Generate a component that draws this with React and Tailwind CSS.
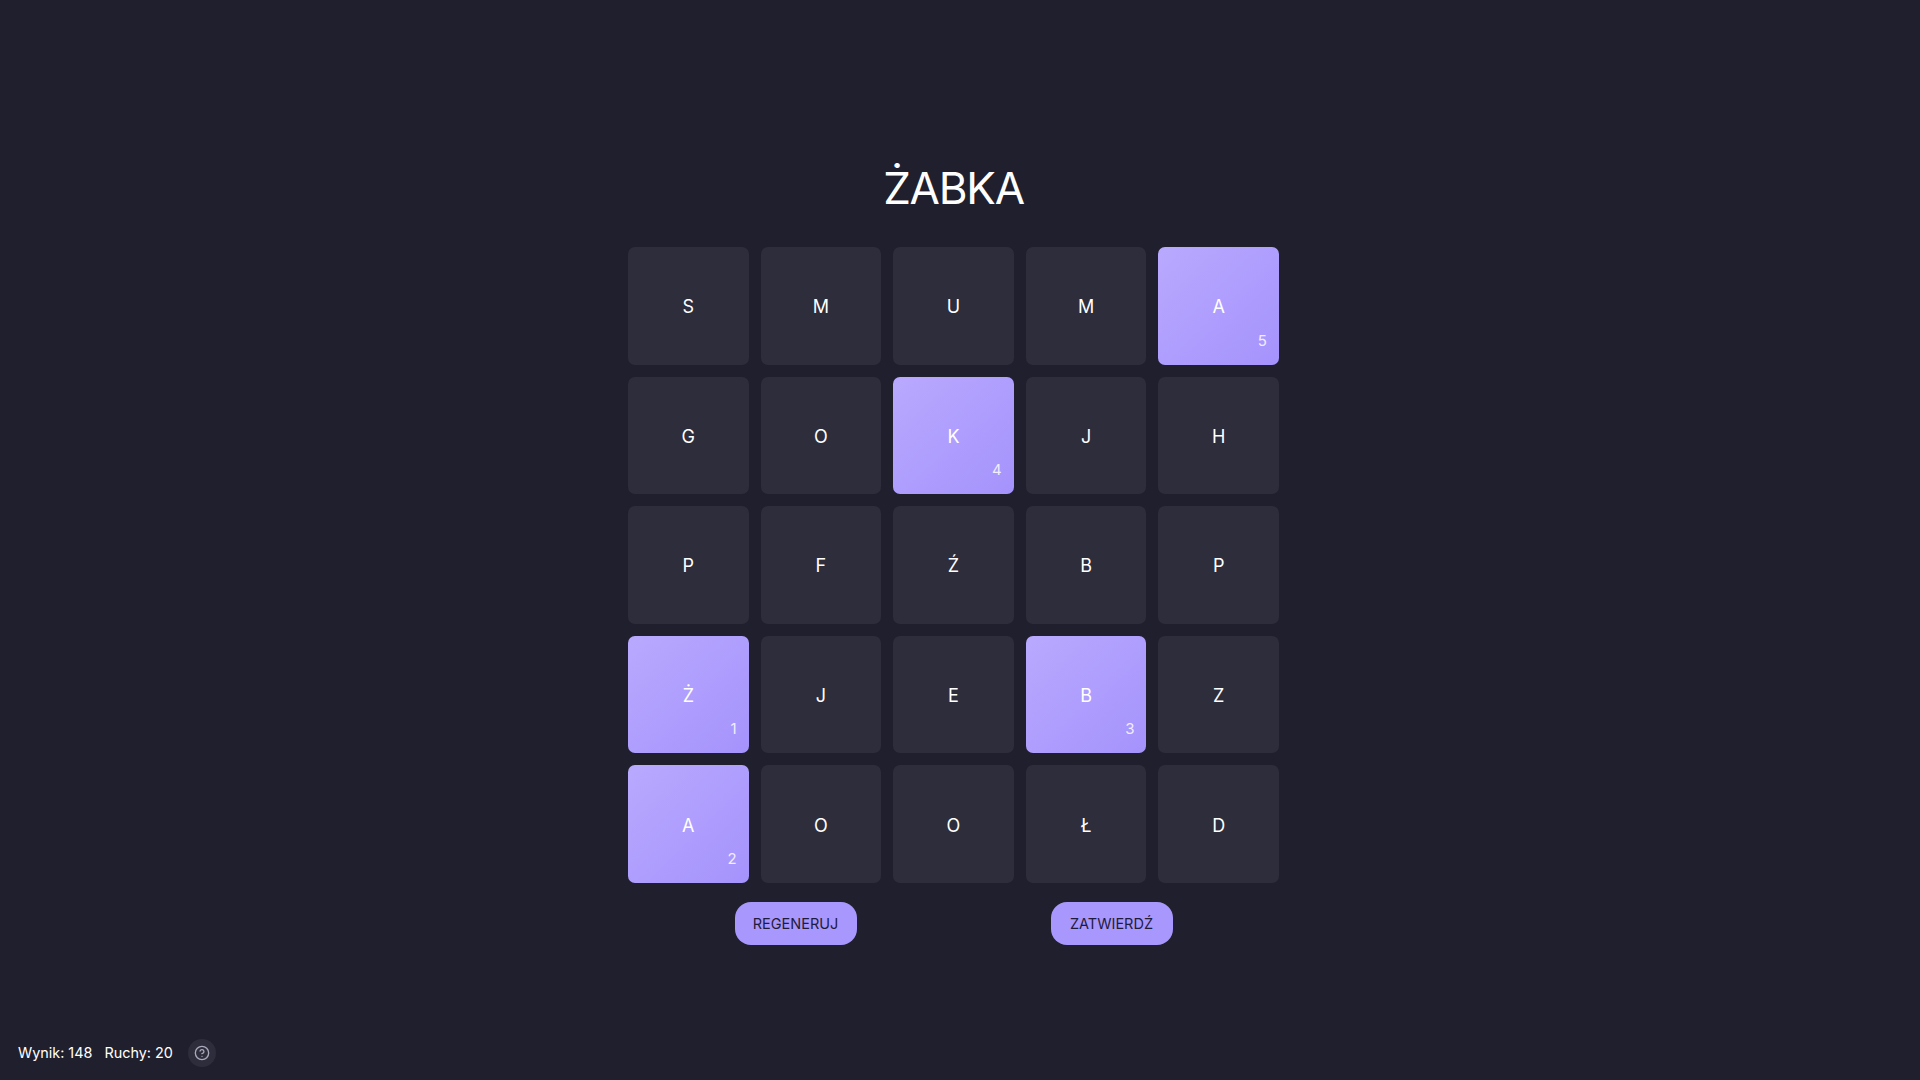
import { CircleHelp } from "lucide-react";

const rows = [
  [["S"], ["M"], ["U"], ["M"], ["A", 5]],
  [["G"], ["O"], ["K", 4], ["J"], ["H"]],
  [["P"], ["F"], ["Ź"], ["B"], ["P"]],
  [["Ż", 1], ["J"], ["E"], ["B", 3], ["Z"]],
  [["A", 2], ["O"], ["O"], ["Ł"], ["D"]],
];

const Tile = ({ letter, order }) => (
  <div
    className={
      "relative flex items-center justify-center rounded-[7px] pt-[2px] text-[18px] text-white " +
      (order ? "bg-gradient-to-br from-[#b9a9fe] to-[#a593fc]" : "bg-[#2d2d3c]")
    }
  >
    {letter}
    {order && <span className="absolute bottom-[17px] right-[12px] text-[15px] leading-none text-[#f1edff]">{order}</span>}
  </div>
);

const Button = ({ children }) => (
  <button className="h-[43px] w-[122px] rounded-2xl bg-[#a897fc] text-[14.5px] text-[#1f1b3d]">{children}</button>
);

export default function App() {
  return (
    <div className="relative flex h-screen flex-col items-center overflow-hidden bg-[#1f1f2e] pr-[13px] font-['Inter',sans-serif]">
      <h1 className="mt-[156px] text-[44px] leading-[64px] tracking-[-1.2px] text-white">ŻABKA</h1>
      <div className="mt-[27px] grid h-[636px] w-[651px] grid-cols-5 grid-rows-5 gap-x-3 gap-y-3">
        {rows.flat().map(([letter, order], i) => (
          <Tile key={i} letter={letter} order={order} />
        ))}
      </div>
      <div className="mt-[19px] flex gap-[194px]">
        <Button>REGENERUJ</Button>
        <Button>ZATWIERDŹ</Button>
      </div>
      <div className="absolute bottom-[13px] left-[18px] flex items-center text-[14.4px] text-white">
        <span>Wynik: 148</span>
        <span className="ml-3">Ruchy: 20</span>
        <span className="ml-[15px] flex h-7 w-7 items-center justify-center rounded-full bg-[#2d2d3c] text-[#a9a9bb]">
          <CircleHelp size={16} />
        </span>
      </div>
    </div>
  );
}
